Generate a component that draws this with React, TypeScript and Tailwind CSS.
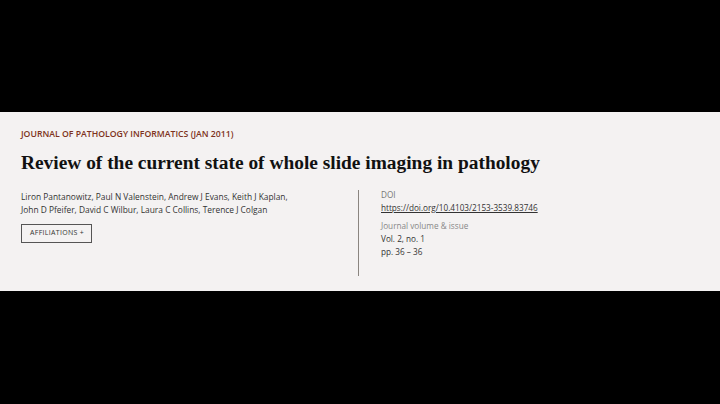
export default function App() {
  return (
    <div className="w-[720px] h-[404px] bg-black overflow-hidden">
      <div className="mt-[112px] h-[179px] bg-[#f4f2f2] pl-[21px] pt-[16px]">
        <div
          className="text-[8.7px] leading-[12px] font-semibold text-[#7e3220]"
          style={{ fontFamily: '"Open Sans", sans-serif' }}
        >
          JOURNAL OF PATHOLOGY INFORMATICS (JAN 2011)
        </div>
        <h1
          className="mt-[11px] text-[19.4px] leading-[24px] font-bold text-[#111]"
          style={{ fontFamily: '"Liberation Serif", serif' }}
        >
          Review of the current state of whole slide imaging in pathology
        </h1>
        <div className="mt-[15px] flex">
          <div className="w-[338px] h-[86px] border-r border-[#8a8580]">
            <div
              className="text-[8.4px] leading-[13px] text-[#333] w-[320px]"
              style={{ fontFamily: '"Open Sans", sans-serif' }}
            >
              <div>Liron Pantanowitz, Paul N Valenstein, Andrew J Evans, Keith J Kaplan,</div>
              <div>John D Pfeifer, David C Wilbur, Laura C Collins, Terence J Colgan</div>
            </div>
            <button
              className="mt-[8px] h-[19px] w-[71px] border border-[#555] text-[7px] tracking-[0.3px] text-[#333] flex items-center pl-[8px]"
              style={{ fontFamily: '"Open Sans", sans-serif' }}
            >
              AFFILIATIONS +
            </button>
          </div>
          <div
            className="pl-[22px] -mt-[1px] text-[8.2px] leading-[12.5px]"
            style={{ fontFamily: '"Open Sans", sans-serif' }}
          >
            <div className="text-[#777]">DOI</div>
            <div className="text-[#333] underline">https://doi.org/10.4103/2153-3539.83746</div>
            <div className="mt-[6px] text-[#888]">Journal volume &amp; issue</div>
            <div className="text-[#333] mt-[0.5px]">Vol. 2, no. 1</div>
            <div className="text-[#333]">pp. 36 – 36</div>
          </div>
        </div>
      </div>
    </div>
  );
}
